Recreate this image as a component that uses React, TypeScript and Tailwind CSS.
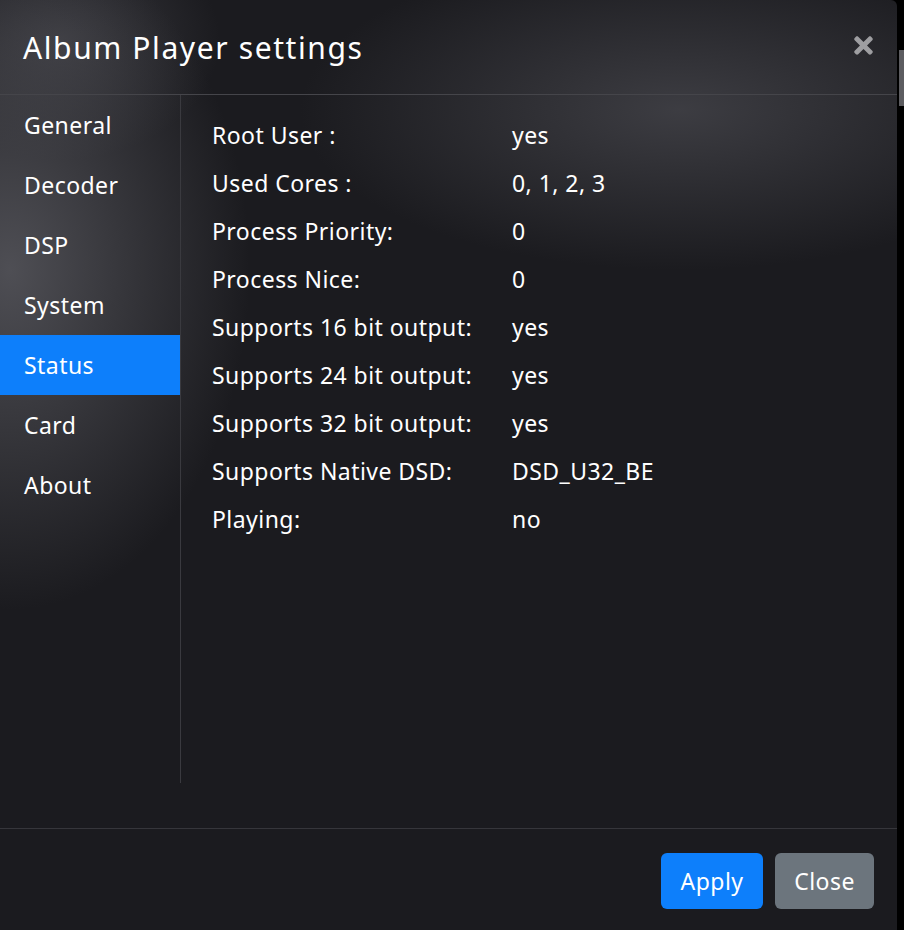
import React from "react";
import { FaTimes } from "react-icons/fa";

const menu = ["General", "Decoder", "DSP", "System", "Status", "Card", "About"];
const rows: [string, string][] = [
  ["Root User :", "yes"],
  ["Used Cores :", "0, 1, 2, 3"],
  ["Process Priority:", "0"],
  ["Process Nice:", "0"],
  ["Supports 16 bit output:", "yes"],
  ["Supports 24 bit output:", "yes"],
  ["Supports 32 bit output:", "yes"],
  ["Supports Native DSD:", "DSD_U32_BE"],
  ["Playing:", "no"],
];

export default function App() {
  return (
    <div className="relative w-[904px] h-[930px] overflow-hidden bg-black font-['Noto_Sans',sans-serif] text-white">
      <div className="absolute right-0 top-[50px] w-[5px] h-[56px] bg-[#5c5c60]" />
      <div className="w-[897px] h-[930px] rounded-tr-[6px] bg-[#1b1b1f] bg-[radial-gradient(ellipse_240px_340px_at_10px_270px,rgba(84,84,90,0.9),rgba(84,84,90,0)),radial-gradient(ellipse_380px_160px_at_680px_110px,rgba(72,72,78,0.75),rgba(72,72,78,0)),radial-gradient(ellipse_160px_120px_at_60px_40px,rgba(70,70,76,0.7),rgba(70,70,76,0))] flex flex-col">
        <div className="h-[95px] shrink-0 flex items-center justify-between pl-[23px] pr-[24px] border-b border-[#45454a]">
          <div className="text-[30px] tracking-[1.6px] leading-none mt-[1px]">Album Player settings</div>
          <FaTimes className="text-[#9e9ea1] w-[19px] h-[27px] -mt-[3px]" />
        </div>
        <div className="h-[734px] shrink-0 flex border-b border-[#36363b]">
          <div className="w-[181px] h-[688px] border-r border-[#3a3a3f] flex flex-col">
            {menu.map((m) => (
              <div
                key={m}
                className={`h-[60px] flex items-center pl-[24px] text-[23px] tracking-[0.45px] ${m === "Status" ? "bg-[#0d7ffb]" : ""}`}
              >
                {m}
              </div>
            ))}
          </div>
          <div className="flex-1 pt-[16px] pl-[31px]">
            {rows.map(([k, v]) => (
              <div key={k} className="h-[48px] flex items-center text-[23px] tracking-[0.45px]">
                <div className="w-[300px]">{k}</div>
                <div>{v}</div>
              </div>
            ))}
          </div>
        </div>
        <div className="flex justify-end gap-[12px] pt-[24px] pr-[23px]">
          <button className="w-[102px] h-[56px] rounded-[6px] bg-[#0d7ffb] text-[23px] tracking-[0.45px] text-white">Apply</button>
          <button className="w-[99px] h-[56px] rounded-[6px] bg-[#6c757d] text-[23px] tracking-[0.45px] text-white">Close</button>
        </div>
      </div>
    </div>
  );
}
